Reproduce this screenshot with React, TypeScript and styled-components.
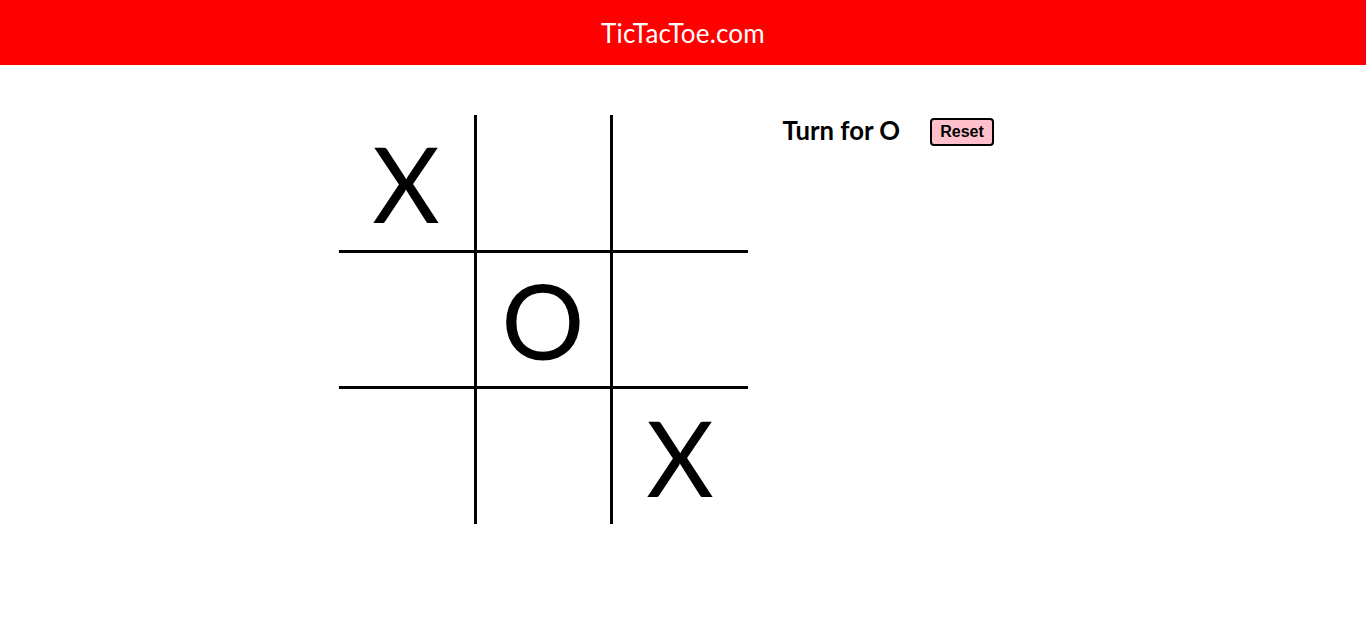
import { useState } from 'react';
import styled, { createGlobalStyle } from 'styled-components';

const GlobalStyle = createGlobalStyle`
  body {
    margin: 0;
    background: #ffffff;
    font-family: Lato, "Open Sans", sans-serif;
  }
`;

const Header = styled.header`
  height: 65px;
  background-color: #ff0000;
  display: flex;
  align-items: center;
  justify-content: center;
`;

const Title = styled.h1`
  margin: 0;
  color: #ffffff;
  font-size: 26px;
  font-weight: 400;
  letter-spacing: 0.2px;
`;

const Main = styled.main`
  display: flex;
  justify-content: center;
  gap: 35px;
  padding-top: 50px;
`;

const Board = styled.div`
  display: grid;
  grid-template-columns: 135px 139px 135px;
  grid-template-rows: 135px 139px 135px;
`;

const Cell = styled.div<{ $middleCol: boolean; $middleRow: boolean }>`
  box-sizing: border-box;
  display: flex;
  align-items: center;
  justify-content: center;
  border-left: ${(p) => (p.$middleCol ? '3px solid #000' : 'none')};
  border-right: ${(p) => (p.$middleCol ? '3px solid #000' : 'none')};
  border-top: ${(p) => (p.$middleRow ? '3px solid #000' : 'none')};
  border-bottom: ${(p) => (p.$middleRow ? '3px solid #000' : 'none')};
  font-size: 104px;
  line-height: 1;
  color: #000;
  cursor: pointer;
`;

const Info = styled.div`
  width: 245px;
  display: flex;
  align-items: flex-start;
  gap: 30px;
`;

const Status = styled.h2`
  margin: 0;
  font-size: 25.7px;
  font-weight: 700;
  color: #000;
`;

const ResetButton = styled.button`
  margin-top: 3px;
  width: 64px;
  height: 28px;
  padding: 0;
  background-color: pink;
  border: 2px solid #000;
  border-radius: 4px;
  font-family: "Liberation Sans", Arial, sans-serif;
  font-size: 16px;
  font-weight: 700;
  color: #000;
  cursor: pointer;
`;

const initial = ['X', '', '', '', 'O', '', '', '', 'X'];

export default function App() {
  const [cells, setCells] = useState<string[]>(initial);
  const [turn, setTurn] = useState<'X' | 'O'>('O');

  const play = (i: number) => {
    if (cells[i]) return;
    const next = [...cells];
    next[i] = turn;
    setCells(next);
    setTurn(turn === 'X' ? 'O' : 'X');
  };

  const reset = () => {
    setCells(Array(9).fill(''));
    setTurn('X');
  };

  return (
    <>
      <GlobalStyle />
      <Header>
        <Title>TicTacToe.com</Title>
      </Header>
      <Main>
        <Board>
          {cells.map((c, i) => (
            <Cell
              key={i}
              $middleCol={i % 3 === 1}
              $middleRow={Math.floor(i / 3) === 1}
              onClick={() => play(i)}
            >
              {c}
            </Cell>
          ))}
        </Board>
        <Info>
          <Status>Turn for {turn}</Status>
          <ResetButton onClick={reset}>Reset</ResetButton>
        </Info>
      </Main>
    </>
  );
}
